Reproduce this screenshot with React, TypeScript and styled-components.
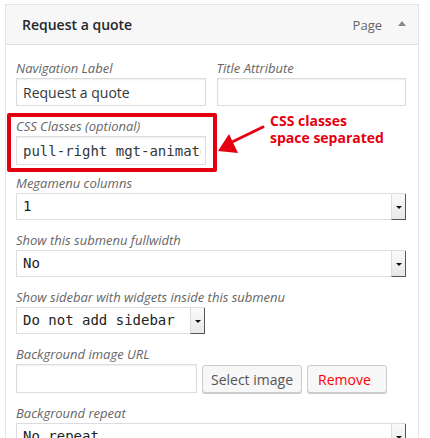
import React from "react";
import styled, { createGlobalStyle } from "styled-components";

const Global = createGlobalStyle`
  html, body { margin: 0; padding: 0; background: #fff; }
  body { font-family: "Open Sans", "Noto Sans", sans-serif; }
  * { box-sizing: border-box; }
`;

const Panel = styled.div`
  margin: 4px 0 0 5px;
  width: 414px;
  border: 1px solid #e5e5e5;
  background: #fff;
`;

const Header = styled.div`
  height: 40px;
  display: flex;
  align-items: center;
  padding: 0 12px 0 16px;
  background: #f7f7f7;
  border-bottom: 1px solid #dfdfdf;
`;

const Title = styled.div`
  flex: 1;
  font-size: 14px;
  font-weight: 600;
  color: #23282d;
`;

const ItemType = styled.span`
  font-size: 13px;
  color: #666;
  margin-right: 16px;
`;

const Toggle = styled.span`
  width: 0;
  height: 0;
  border-left: 4px solid transparent;
  border-right: 4px solid transparent;
  border-bottom: 5px solid #888;
  margin-top: -2px;
`;

const Body = styled.div`
  padding: 14px 12px 40px 10px;
  display: flex;
  flex-direction: column;
  gap: 11px;
`;

const Row = styled.div`
  display: flex;
  gap: 11px;
`;

const Field = styled.div<{ $width?: number; $pull?: number }>`
  position: relative;
  display: flex;
  flex-direction: column;
  width: ${(p) => (p.$width ? `${p.$width}px` : "100%")};
  margin-bottom: ${(p) => (p.$pull ? `-${p.$pull}px` : "0")};
`;

const Label = styled.label`
  font-size: 13px;
  font-style: italic;
  line-height: 19px;
  color: #666;
  white-space: nowrap;
`;

const TextInput = styled.div<{ $mono?: boolean; $height?: number; $width?: number }>`
  height: ${(p) => p.$height ?? 28}px;
  width: ${(p) => (p.$width ? `${p.$width}px` : "100%")};
  border: 1px solid #ddd;
  box-shadow: inset 0 1px 2px rgba(0, 0, 0, 0.07);
  background: #fff;
  padding: 0 4px 0 5px;
  display: flex;
  align-items: center;
  white-space: nowrap;
  color: #32373c;
  font-size: 14px;
  font-family: ${(p) =>
    p.$mono ? '"DejaVu Sans Mono", monospace' : '"Open Sans", sans-serif'};
`;

const InputText = styled.span`
  flex: 1;
  overflow: hidden;
  white-space: nowrap;
  padding-left: 1px;
`;

const SelectBox = styled.div<{ $width?: number }>`
  height: 27px;
  width: ${(p) => (p.$width ? `${p.$width}px` : "100%")};
  border: 1px solid #ddd;
  background: #fff;
  display: flex;
  align-items: stretch;
`;

const SelectValue = styled.span`
  flex: 1;
  padding-left: 6px;
  font-family: "DejaVu Sans Mono", monospace;
  font-size: 14px;
  line-height: 25px;
  color: #222;
  white-space: nowrap;
  overflow: hidden;
`;

const ArrowBox = styled.span`
  width: 15px;
  margin: 0 -1px -1px 0;
  background: linear-gradient(#fafafa, #e8e8e8);
  border-left: 1px solid #dcdcdc;
  border-right: 1px solid #555;
  border-bottom: 1px solid #555;
  display: flex;
  align-items: center;
  justify-content: center;
  &::after {
    content: "";
    width: 0;
    height: 0;
    margin-top: 2px;
    border-left: 3px solid transparent;
    border-right: 3px solid transparent;
    border-top: 3px solid #111;
  }
`;

const ButtonRow = styled.div`
  display: flex;
  align-items: center;
  gap: 5px;
`;

const Button = styled.button<{ $danger?: boolean; $width: number }>`
  height: 28px;
  width: ${(p) => p.$width}px;
  margin-top: 1px;
  border: 1px solid #ccc;
  border-radius: 3px;
  background: #f7f7f7;
  box-shadow: 0 1px 0 #ccc;
  font-family: "Open Sans", sans-serif;
  font-size: 14px;
  color: ${(p) => (p.$danger ? "#f00" : "#555")};
  text-align: ${(p) => (p.$danger ? "left" : "center")};
  padding: ${(p) => (p.$danger ? "0 0 0 10px" : "0")};
`;

const Highlight = styled.div`
  position: absolute;
  top: -4px;
  left: -9px;
  width: 210px;
  height: 59px;
  border: 4px solid #e5000f;
  border-radius: 2px;
  pointer-events: none;
`;

const Note = styled.div`
  position: absolute;
  left: 254px;
  top: -5px;
  font-family: "Open Sans", sans-serif;
  font-weight: 700;
  font-size: 14px;
  line-height: 17px;
  color: #e5000f;
  white-space: nowrap;
`;

const NoteArrow = styled.svg`
  position: absolute;
  left: 200px;
  top: 6px;
  overflow: visible;
`;

function Select({ value, width }: { value: string; width?: number }) {
  return (
    <SelectBox $width={width}>
      <SelectValue>{value}</SelectValue>
      <ArrowBox />
    </SelectBox>
  );
}

export default function App() {
  return (
    <>
      <Global />
      <Panel>
        <Header>
          <Title>Request a quote</Title>
          <ItemType>Page</ItemType>
          <Toggle />
        </Header>
        <Body>
          <Row>
            <Field $width={190}>
              <Label>Navigation Label</Label>
              <TextInput>
                <InputText>Request a quote</InputText>
              </TextInput>
            </Field>
            <Field $width={190}>
              <Label>Title Attribute</Label>
              <TextInput />
            </Field>
          </Row>
          <Field $width={190} $pull={2}>
            <Label>CSS Classes (optional)</Label>
            <TextInput $mono $height={29}>
              <InputText>pull-right mgt-animate</InputText>
            </TextInput>
            <Highlight />
            <NoteArrow width="50" height="32" viewBox="0 0 50 32">
              <path d="M47 4 L16 19" stroke="#e5000f" strokeWidth="3" strokeLinecap="round" />
              <polygon points="2,28 13,11 22,30" fill="#e5000f" />
            </NoteArrow>
            <Note>
              CSS classes
              <br />
              space separated
            </Note>
          </Field>
          <Field>
            <Label>Megamenu columns</Label>
            <Select value="1" />
          </Field>
          <Field>
            <Label>Show this submenu fullwidth</Label>
            <Select value="No" />
          </Field>
          <Field>
            <Label>Show sidebar with widgets inside this submenu</Label>
            <Select value="Do not add sidebar" width={189} />
          </Field>
          <Field>
            <Label>Background image URL</Label>
            <ButtonRow>
              <TextInput $height={29} $width={181} />
              <Button $width={100}>Select image</Button>
              <Button $danger $width={80}>Remove</Button>
            </ButtonRow>
          </Field>
          <Field>
            <Label>Background repeat</Label>
            <Select value="No repeat" />
          </Field>
        </Body>
      </Panel>
    </>
  );
}
